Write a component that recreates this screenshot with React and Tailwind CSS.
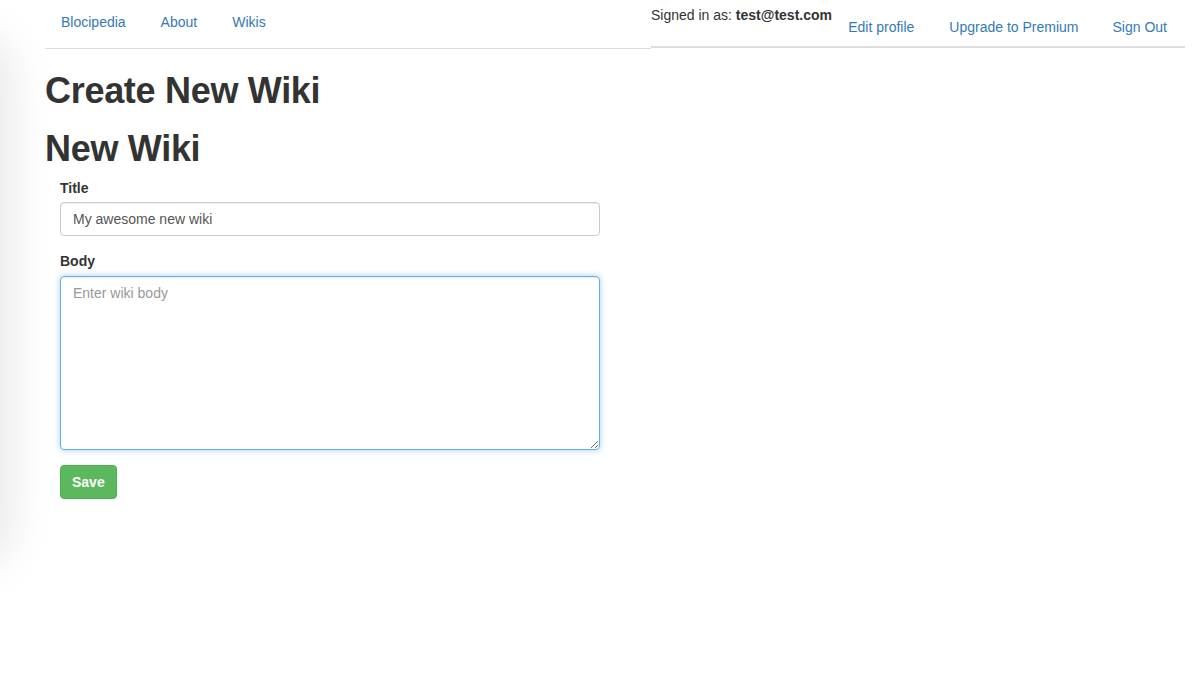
import React from "react";

const App = () => {
  return (
    <div className="relative min-h-[674px] w-full overflow-hidden bg-white font-['Liberation_Sans',Arial,sans-serif] text-[14px] leading-5 text-[#333]">
      {/* soft shadow coming in from the left edge */}
      <div className="pointer-events-none absolute -left-[80px] top-[40px] h-[520px] w-[80px] rounded-[40px] bg-white shadow-[0_0_45px_12px_rgba(0,0,0,0.09)]"></div>

      <div className="flex pl-[45px] pr-[16px]">
        <ul className="flex flex-1 border-b border-[#ddd] h-[49px]">
          <li>
            <a href="#" className="block pl-[16px] pr-[19px] pt-[12px] text-[#337ab7]">
              Blocipedia
            </a>
          </li>
          <li>
            <a href="#" className="block pl-[16px] pr-[19px] pt-[12px] text-[#337ab7]">
              About
            </a>
          </li>
          <li>
            <a href="#" className="block pl-[16px] pr-[18px] pt-[12px] text-[#337ab7]">
              Wikis
            </a>
          </li>
        </ul>
        <div className="flex w-[534px] h-[48px] border-b-2 border-[#ddd]">
          <p className="pt-[5px]">
            Signed in as: <strong>test@test.com</strong>
          </p>
          <ul className="ml-auto flex">
            <li>
              <a href="#" className="block pl-[16px] pr-[19px] pt-[17px] text-[#337ab7]">
                Edit profile
              </a>
            </li>
            <li>
              <a href="#" className="block pl-[16px] pr-[18px] pt-[17px] text-[#337ab7]">
                Upgrade to Premium
              </a>
            </li>
            <li>
              <a href="#" className="block pl-[16px] pr-[18px] pt-[17px] text-[#337ab7]">
                Sign Out
              </a>
            </li>
          </ul>
        </div>
      </div>

      <div className="relative pl-[45px]">
        <h1 className="mt-[22px] mb-[10px] text-[36px] leading-[40px] font-bold tracking-[-0.3px]">
          Create New Wiki
        </h1>
        <h1 className="mt-[18px] mb-[9px] text-[36px] leading-[40px] font-bold tracking-[-0.3px]">
          New Wiki
        </h1>

        <form className="w-[540px] ml-[15px]" onSubmit={(e) => e.preventDefault()}>
          <div className="mb-[15px]">
            <label className="mb-[4px] block font-bold">Title</label>
            <input
              type="text"
              defaultValue="My awesome new wiki"
              className="block h-[34px] w-full rounded-[4px] border border-[#ccc] px-[12px] text-[#555] shadow-[inset_0_1px_1px_rgba(0,0,0,0.075)] outline-none"
            />
          </div>
          <div className="mb-[15px]">
            <label className="mb-[5px] block font-bold">Body</label>
            <textarea
              placeholder="Enter wiki body"
              className="block h-[174px] w-full rounded-[4px] border border-[#66afe9] px-[12px] py-[6px] text-[#555] placeholder:text-[#999] shadow-[inset_0_1px_1px_rgba(0,0,0,0.075),0_0_6px_rgba(102,175,233,0.6)] outline-none"
            ></textarea>
          </div>
          <button
            type="submit"
            className="h-[34px] rounded-[4px] border border-[#4cae4c] bg-[#5cb85c] px-[11px] font-bold text-white"
          >
            Save
          </button>
        </form>
      </div>
    </div>
  );
};

export default App;
